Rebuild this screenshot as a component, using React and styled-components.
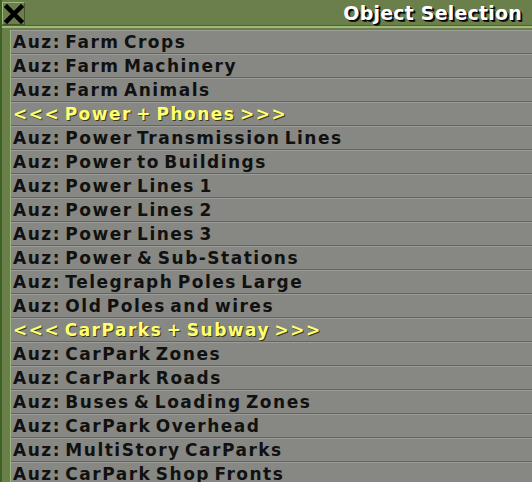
import React from "react";
import styled, { createGlobalStyle } from "styled-components";

const Global = createGlobalStyle`
  html, body { margin: 0; padding: 0; background: #4c6b2c; }
  #root { width: 532px; height: 482px; overflow: hidden; }
`;

const Window = styled.div`
  width: 532px;
  height: 482px;
  display: flex;
  flex-direction: column;
  background: #6b7f4b;
  border-left: 2px solid #3f6325;
  box-sizing: border-box;
  font-family: "DejaVu Sans", Verdana, sans-serif;
  font-weight: bold;
`;

const TitleBar = styled.div`
  height: 25px;
  display: flex;
  align-items: center;
  justify-content: space-between;
  padding: 0 10px 0 0;
  border-bottom: 1px solid #4f5f36;
  box-shadow: 0 1px 0 #9fb97a, 0 2px 0 #9fb97a;
`;

const CloseBox = styled.button`
  width: 23px;
  height: 23px;
  margin: 2px 0 0 0;
  padding: 0;
  display: flex;
  align-items: center;
  justify-content: center;
  background: #6b7f4b;
  border: 1px solid #9fb97a;
  border-right-color: #46552f;
  border-bottom-color: #46552f;
`;

const Title = styled.div`
  color: #fff;
  font-size: 19px;
  letter-spacing: 0.2px;
  text-shadow: 1px 1px 0 #000, 2px 2px 0 #1a1a1a;
  margin-top: 1px;
`;

const Body = styled.div`
  flex: 1;
  display: flex;
  margin-top: 4px;
  min-height: 0;
`;

const Gutter = styled.div`
  width: 8px;
  background: #6b7f4b;
  border-right: 1px solid #9fb97a;
`;

const List = styled.ul`
  flex: 1;
  margin: 0;
  padding: 0;
  list-style: none;
  background: #878883;
  overflow: hidden;
`;

const Row = styled.li`
  height: 22px;
  display: flex;
  align-items: center;
  padding-left: 2px;
  border-top: 1px solid #9c9d98;
  border-bottom: 1px solid #63645f;
  font-size: 17px;
  letter-spacing: 1.5px;
  word-spacing: -3px;
  white-space: nowrap;
  color: ${(p) => (p.$header ? "#ffff70" : "#111")};
  text-shadow: ${(p) => (p.$header ? "1px 1px 0 #3a3a1a" : "none")};
`;

const items = [
  "Auz: Farm Crops",
  "Auz: Farm Machinery",
  "Auz: Farm Animals",
  "<<< Power + Phones >>>",
  "Auz: Power Transmission Lines",
  "Auz: Power to Buildings",
  "Auz: Power Lines 1",
  "Auz: Power Lines 2",
  "Auz: Power Lines 3",
  "Auz: Power & Sub-Stations",
  "Auz: Telegraph Poles Large",
  "Auz: Old Poles and wires",
  "<<< CarParks + Subway >>>",
  "Auz: CarPark Zones",
  "Auz: CarPark Roads",
  "Auz: Buses & Loading Zones",
  "Auz: CarPark Overhead",
  "Auz: MultiStory CarParks",
  "Auz: CarPark Shop Fronts",
];

export default function App() {
  return (
    <>
      <Global />
      <Window>
        <TitleBar>
          <CloseBox aria-label="Close">
            <svg width="20" height="20" viewBox="0 0 20 20">
              <path d="M3 3 L17 17 M17 3 L3 17" stroke="#000" strokeWidth="4.5" strokeLinecap="square" />
            </svg>
          </CloseBox>
          <Title>Object Selection</Title>
        </TitleBar>
        <Body>
          <Gutter />
          <List>
            {items.map((t) => (
              <Row key={t} $header={t.startsWith("<<<")}>
                {t}
              </Row>
            ))}
          </List>
        </Body>
      </Window>
    </>
  );
}
